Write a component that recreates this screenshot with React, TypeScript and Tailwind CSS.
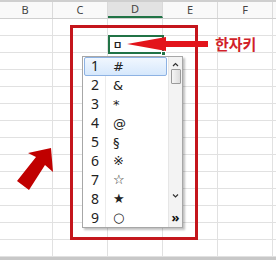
import React from "react";

const cols = ["B", "C", "D", "E", "F", ""];
const items = ["#", "&", "*", "@", "§", "※", "☆", "★", "○"];

export default function App() {
  return (
    <div className="relative w-[276px] h-[260px] overflow-hidden bg-white" style={{ fontFamily: '"Noto Sans", "DejaVu Sans", sans-serif' }}>
      <div className="h-[2px] bg-[#cfcfcf]" />
      {/* header */}
      <div className="flex h-[17px] ml-[-2px] border-b border-[#cfcfcf] bg-[#f9f9f9]">
        {cols.map((c, i) => (
          <div
            key={i}
            className={`w-[55px] shrink-0 flex items-center justify-center text-[11px] text-[#444] border-r border-[#dadada] ${c === "D" ? "bg-[#e2e2e2] border-b-2 border-b-[#217346]" : ""}`}
          >
            {c}
          </div>
        ))}
      </div>
      {Array.from({ length: 14 }).map((_, r) => (
        <div key={r} className="flex h-[17px] ml-[-2px] border-b border-[#e1e1e1]">
          {cols.map((c, i) => (
            <div key={i} className="w-[55px] shrink-0 border-r border-[#e1e1e1]" />
          ))}
        </div>
      ))}
      <div className="h-[3px] bg-[#c8c8c8]" />

      {/* active cell */}
      <div className="absolute left-[108px] top-[35px] w-[56px] h-[19px] border-2 border-[#217346] bg-white flex items-center pl-[3px]">
        <span className="text-[10px] font-bold leading-none text-[#222]" style={{ fontFamily: '"Noto Sans CJK KR", sans-serif' }}>ㅁ</span>
      </div>
      <div className="absolute left-[161px] top-[51px] w-[5px] h-[5px] bg-[#217346] border border-white" />

      {/* red rectangle */}
      <div className="absolute left-[70px] top-[25px] w-[128px] h-[215px] border-[3px] border-[#c4161c]" />

      {/* dropdown */}
      <div className="absolute left-[82px] top-[56px] w-[101px] h-[172px] bg-white border border-[#a7a7a7] shadow-[2px_2px_2px_rgba(0,0,0,0.25)] flex">
        <div className="relative flex-1 flex flex-col">
          <div className="absolute left-[22px] top-0 bottom-0 w-px bg-[#ececec]" />
          {items.map((s, i) => (
            <div
              key={i}
              className={`relative flex items-center h-[19px] mx-[1px] ${i === 0 ? "rounded-[2px] border border-[#8db2e3] bg-gradient-to-b from-[#f1f7fe] to-[#d6e8fc]" : "border border-transparent"}`}
            >
              <span className="w-[20px] pl-[6px] text-[14px] leading-none text-[#222]">{i + 1}</span>
              <span className="pl-[8px] text-[13px] leading-none text-[#222]" style={{ fontFamily: '"DejaVu Sans", sans-serif' }}>{s}</span>
            </div>
          ))}
        </div>
        <div className="w-[14px] bg-[#f3f3f3] border-l border-[#e6e6e6] flex flex-col items-center">
          <svg width="7" height="5" viewBox="0 0 7 5" className="mt-[5px]">
            <path d="M1 4 L3.5 1.5 L6 4" stroke="#333" strokeWidth="1.2" fill="none" />
          </svg>
          <div className="mt-[2px] w-[10px] h-[15px] rounded-[1px] border border-[#9a9a9a] bg-gradient-to-r from-[#f5f5f5] to-[#dcdcdc]" />
          <div className="flex-1" />
          <svg width="7" height="5" viewBox="0 0 7 5" className="mb-[13px]">
            <path d="M1 1.5 L3.5 4 L6 1.5" stroke="#333" strokeWidth="1.2" fill="none" />
          </svg>
          <span className="mb-[3px] text-[13px] leading-none font-bold text-[#111]">»</span>
        </div>
      </div>

      {/* arrows */}
      <svg className="absolute left-0 top-0" width="276" height="260" viewBox="0 0 276 260">
        <path d="M127 44 L166 37 L166 41 L208 41 L208 47 L166 47 L166 51 Z" fill="#e3141b" />
        <path d="M51 148 L53 172 L45 165 L29 190 L17 181 L36 157 L28 153 Z" fill="#c00000" />
      </svg>

      <span
        className="absolute left-[215px] top-[33px] text-[15px] font-bold leading-[22px] text-[#d11f2a]"
        style={{ fontFamily: '"Noto Sans CJK KR", sans-serif' }}
      >
        한자키
      </span>
    </div>
  );
}
